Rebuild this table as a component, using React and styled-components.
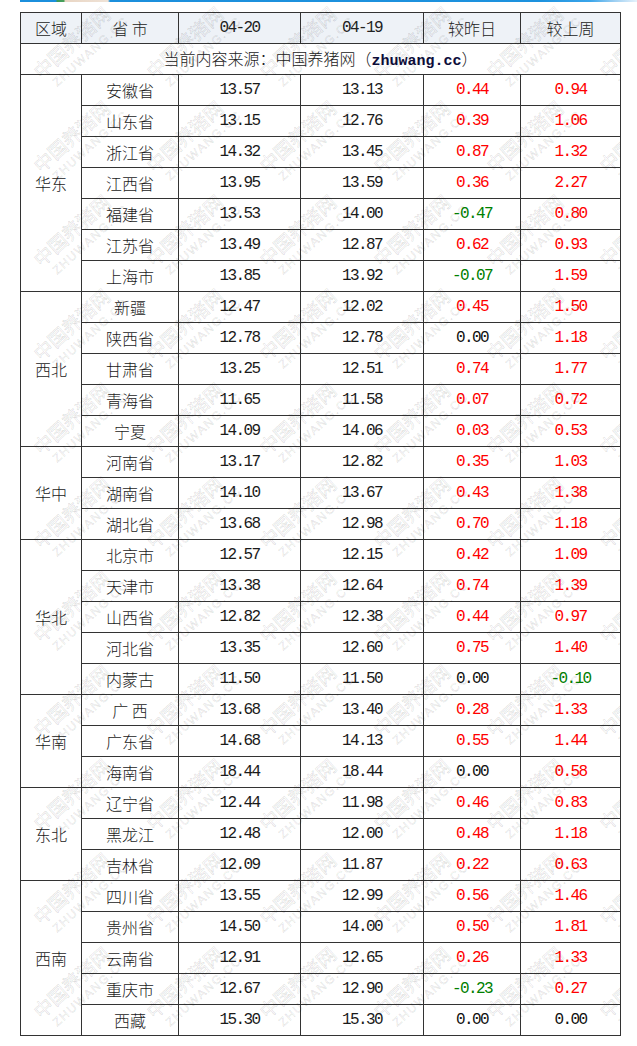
import React from "react";
import styled, { createGlobalStyle } from "styled-components";

const GlobalStyle = createGlobalStyle`
  body {
    margin: 0;
    background: #fff;
    font-family: "Noto Sans CJK SC", "Liberation Sans", sans-serif;
  }
`;

const regions = [
  ["华东", [
    ["安徽省", "13.57", "13.13", "0.44", "0.94"],
    ["山东省", "13.15", "12.76", "0.39", "1.06"],
    ["浙江省", "14.32", "13.45", "0.87", "1.32"],
    ["江西省", "13.95", "13.59", "0.36", "2.27"],
    ["福建省", "13.53", "14.00", "-0.47", "0.80"],
    ["江苏省", "13.49", "12.87", "0.62", "0.93"],
    ["上海市", "13.85", "13.92", "-0.07", "1.59"],
  ]],
  ["西北", [
    ["新疆", "12.47", "12.02", "0.45", "1.50"],
    ["陕西省", "12.78", "12.78", "0.00", "1.18"],
    ["甘肃省", "13.25", "12.51", "0.74", "1.77"],
    ["青海省", "11.65", "11.58", "0.07", "0.72"],
    ["宁夏", "14.09", "14.06", "0.03", "0.53"],
  ]],
  ["华中", [
    ["河南省", "13.17", "12.82", "0.35", "1.03"],
    ["湖南省", "14.10", "13.67", "0.43", "1.38"],
    ["湖北省", "13.68", "12.98", "0.70", "1.18"],
  ]],
  ["华北", [
    ["北京市", "12.57", "12.15", "0.42", "1.09"],
    ["天津市", "13.38", "12.64", "0.74", "1.39"],
    ["山西省", "12.82", "12.38", "0.44", "0.97"],
    ["河北省", "13.35", "12.60", "0.75", "1.40"],
    ["内蒙古", "11.50", "11.50", "0.00", "-0.10"],
  ]],
  ["华南", [
    ["广 西", "13.68", "13.40", "0.28", "1.33"],
    ["广东省", "14.68", "14.13", "0.55", "1.44"],
    ["海南省", "18.44", "18.44", "0.00", "0.58"],
  ]],
  ["东北", [
    ["辽宁省", "12.44", "11.98", "0.46", "0.83"],
    ["黑龙江", "12.48", "12.00", "0.48", "1.18"],
    ["吉林省", "12.09", "11.87", "0.22", "0.63"],
  ]],
  ["西南", [
    ["四川省", "13.55", "12.99", "0.56", "1.46"],
    ["贵州省", "14.50", "14.00", "0.50", "1.81"],
    ["云南省", "12.91", "12.65", "0.26", "1.33"],
    ["重庆市", "12.67", "12.90", "-0.23", "0.27"],
    ["西藏", "15.30", "15.30", "0.00", "0.00"],
  ]],
];

const tone = (v) => {
  const n = parseFloat(v);
  if (n > 0) return "up";
  if (n < 0) return "down";
  return "flat";
};

const App = () => {
  // 7 columns x 11 rows of watermark stamps
  const marks = Array.from({ length: 7 * 11 });

  return (
    <Page>
      <GlobalStyle />
      <Banner />
      <TableWrap>
        <Table>
          <colgroup>
            <col style={{ width: 61 }} />
            <col style={{ width: 97 }} />
            <col style={{ width: 122 }} />
            <col style={{ width: 123 }} />
            <col style={{ width: 97 }} />
            <col style={{ width: 100 }} />
          </colgroup>
          <thead>
            <tr>
              <HeadCell>区域</HeadCell>
              <HeadCell>省&nbsp;市</HeadCell>
              <HeadCell mono>04-20</HeadCell>
              <HeadCell mono>04-19</HeadCell>
              <HeadCell>较昨日</HeadCell>
              <HeadCell>较上周</HeadCell>
            </tr>
          </thead>
          <tbody>
            <tr>
              <SourceCell colSpan={6}>
                当前内容来源：中国养猪网（<Site>zhuwang.cc</Site>）
              </SourceCell>
            </tr>
            {regions.map(([region, rows]) =>
              rows.map((r, i) => (
                <tr key={region + r[0]}>
                  {i === 0 && <Cell rowSpan={rows.length}>{region}</Cell>}
                  <Cell>{r[0]}</Cell>
                  <NumCell>{r[1]}</NumCell>
                  <NumCell>{r[2]}</NumCell>
                  <NumCell tone={tone(r[3])}>{r[3]}</NumCell>
                  <NumCell tone={tone(r[4])}>{r[4]}</NumCell>
                </tr>
              ))
            )}
          </tbody>
        </Table>
        <Watermarks aria-hidden="true">
          {marks.map((_, i) => (
            <Mark key={i}>
              <MarkMain>中国养猪网</MarkMain>
              <MarkSub>ZHUWANG.CC</MarkSub>
            </Mark>
          ))}
        </Watermarks>
      </TableWrap>
    </Page>
  );
};

export default App;

const Page = styled.div`
  width: 637px;
  min-height: 1046px;
  background: #fff;
`;

const Banner = styled.div`
  height: 2px;
  margin-left: 20px;
  background: linear-gradient(
    90deg,
    #1b8fdc 0px,
    #1b8fdc 36px,
    #3a9a5c 37px,
    #4aa05a 44px,
    #e9d6c4 45px,
    #efe2d6 88px,
    #1b8fdc 90px,
    #1d92de 520px,
    #3aa5ea 570px,
    #9fd0f2 595px,
    #e6f2fb 617px
  );
`;

const TableWrap = styled.div`
  position: relative;
  width: 600px;
  margin: 10px 0 0 20px;
`;

const Table = styled.table`
  width: 600px;
  border-collapse: collapse;
  table-layout: fixed;
  font-size: 16px;
  color: #1a1a1a;
`;

const Cell = styled.td`
  height: 30px;
  padding: 0;
  border: 1px solid #333;
  text-align: center;
  vertical-align: middle;
  font-family: "Noto Sans CJK SC", sans-serif;
  font-weight: 300;
  line-height: 1;
  white-space: pre;
`;

const HeadCell = styled.th`
  height: 30px;
  padding: 0;
  border: 1px solid #333;
  background: #eef2f7;
  text-align: center;
  vertical-align: middle;
  font-weight: 300;
  line-height: 1;
  color: #222;
  font-family: ${({ mono }) =>
    mono ? `"Liberation Mono", monospace` : `"Noto Sans CJK SC", sans-serif`};
  letter-spacing: ${({ mono }) => (mono ? "-1.6px" : "0")};
`;

const SourceCell = styled(Cell)`
  color: #222;
`;

const Site = styled.span`
  font-family: "Liberation Mono", monospace;
  font-weight: 700;
  font-size: 15px;
  color: #0d0d3a;
`;

const toneColor = {
  up: "#ff0000",
  down: "#008000",
  flat: "#111",
};

const NumCell = styled(Cell)`
  font-family: "Liberation Mono", monospace;
  font-weight: 400;
  letter-spacing: -1.6px;
  color: ${({ tone }) => toneColor[tone] || "#1a1a1a"};
`;

const Watermarks = styled.div`
  position: absolute;
  top: -11px;
  left: 0;
  right: 0;
  bottom: 0;
  overflow: hidden;
  pointer-events: none;
  display: grid;
  grid-template-columns: repeat(7, 1fr);
  grid-template-rows: repeat(11, 94px);
`;

const Mark = styled.div`
  display: flex;
  flex-direction: column;
  align-items: center;
  justify-content: center;
  transform: rotate(-42deg);
  white-space: nowrap;
`;

const MarkMain = styled.span`
  font-family: "Noto Sans CJK SC", sans-serif;
  font-size: 19px;
  font-weight: 400;
  line-height: 1;
  color: transparent;
  -webkit-text-stroke: 0.6px rgba(0, 0, 0, 0.15);
`;

const MarkSub = styled.span`
  margin-top: 5px;
  margin-left: 16px;
  font-family: "Liberation Sans", sans-serif;
  font-size: 12px;
  letter-spacing: 1.5px;
  line-height: 1;
  color: transparent;
  -webkit-text-stroke: 0.5px rgba(0, 0, 0, 0.15);
`;
